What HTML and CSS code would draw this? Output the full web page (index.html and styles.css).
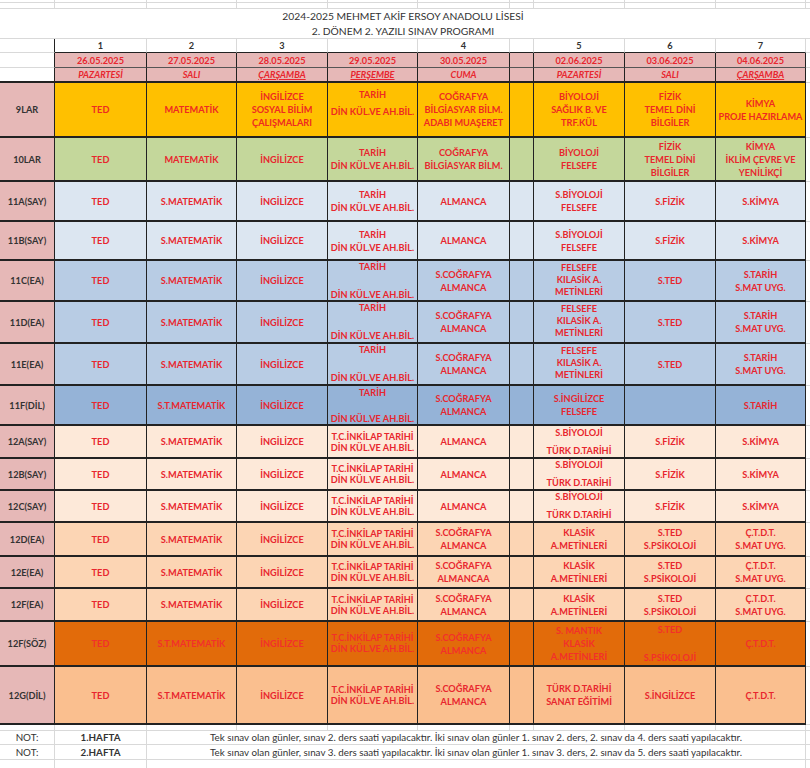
FILE: index.html
```html
<!DOCTYPE html>
<html lang="tr">
<head>
<meta charset="utf-8">
<title>2024-2025 Sınav Programı</title>
<link rel="stylesheet" href="styles.css">
</head>
<body>
<div class="sheet">
  <div class="row h3"><div class="c"></div><div class="c"></div><div class="c"></div><div class="c"></div><div class="c"></div><div class="c"></div><div class="c"></div><div class="c"></div><div class="c"></div><div class="c"></div></div>
  <div class="row h6"><div class="c"></div><div class="c"></div><div class="c"></div><div class="c"></div><div class="c"></div><div class="c"></div><div class="c"></div><div class="c"></div><div class="c"></div><div class="c"></div></div>
  <div class="row h30"><div class="c title">2024-2025 MEHMET AKİF ERSOY ANADOLU LİSESİ<br>2. DÖNEM 2. YAZILI SINAV PROGRAMI</div></div>

  <div class="row h14 nums">
    <div class="c blank"></div><div class="c">1</div><div class="c">2</div><div class="c">3</div><div class="c"></div><div class="c">4</div><div class="c"></div><div class="c">5</div><div class="c">6</div><div class="c">7</div>
  </div>
  <div class="row h15 hdr dates">
    <div class="c blank"></div><div class="c">26.05.2025</div><div class="c">27.05.2025</div><div class="c">28.05.2025</div><div class="c">29.05.2025</div><div class="c">30.05.2025</div><div class="c"></div><div class="c">02.06.2025</div><div class="c">03.06.2025</div><div class="c">04.06.2025</div>
  </div>
  <div class="row h15 hdr days">
    <div class="c blank"></div><div class="c">PAZARTESİ</div><div class="c">SALI</div><div class="c"><u>ÇARŞAMBA</u></div><div class="c"><u>PERŞEMBE</u></div><div class="c">CUMA</div><div class="c"></div><div class="c">PAZARTESİ</div><div class="c">SALI</div><div class="c"><u>ÇARŞAMBA</u></div>
  </div>

  <div class="row d h55 bg-9">
    <div class="c lbl">9LAR</div><div class="c">TED</div><div class="c">MATEMATİK</div><div class="c">İNGİLİZCE<br>SOSYAL BİLİM<br>ÇALIŞMALARI</div><div class="c l17">TARİH<br>DİN KÜL.VE AH.BİL.</div><div class="c">COĞRAFYA<br>BİLGİASYAR BİLM.<br>ADABI MUAŞERET</div><div class="c"></div><div class="c">BİYOLOJİ<br>SAĞLIK B. VE<br>TRF.KÜL</div><div class="c">FİZİK<br>TEMEL DİNİ<br>BİLGİLER</div><div class="c">KİMYA<br>PROJE HAZIRLAMA</div>
  </div>
  <div class="row d h44 bg-10">
    <div class="c lbl">10LAR</div><div class="c">TED</div><div class="c">MATEMATİK</div><div class="c">İNGİLİZCE</div><div class="c">TARİH<br>DİN KÜL.VE AH.BİL.</div><div class="c">COĞRAFYA<br>BİLGİASYAR BİLM.</div><div class="c"></div><div class="c">BİYOLOJİ<br>FELSEFE</div><div class="c">FİZİK<br>TEMEL DİNİ<br>BİLGİLER</div><div class="c">KİMYA<br>İKLİM ÇEVRE VE<br>YENİLİKÇİ</div>
  </div>
  <div class="row d h40 bg-11a">
    <div class="c lbl">11A(SAY)</div><div class="c">TED</div><div class="c">S.MATEMATİK</div><div class="c">İNGİLİZCE</div><div class="c">TARİH<br>DİN KÜL.VE AH.BİL.</div><div class="c">ALMANCA</div><div class="c"></div><div class="c">S.BİYOLOJİ<br>FELSEFE</div><div class="c">S.FİZİK</div><div class="c">S.KİMYA</div>
  </div>
  <div class="row d h39 bg-11a">
    <div class="c lbl">11B(SAY)</div><div class="c">TED</div><div class="c">S.MATEMATİK</div><div class="c">İNGİLİZCE</div><div class="c">TARİH<br>DİN KÜL.VE AH.BİL.</div><div class="c">ALMANCA</div><div class="c"></div><div class="c">S.BİYOLOJİ<br>FELSEFE</div><div class="c">S.FİZİK</div><div class="c">S.KİMYA</div>
  </div>
  <div class="row d h41 bg-11c">
    <div class="c lbl">11C(EA)</div><div class="c">TED</div><div class="c">S.MATEMATİK</div><div class="c">İNGİLİZCE</div><div class="c sp">TARİH<br><br>DİN KÜL.VE AH.BİL.</div><div class="c">S.COĞRAFYA<br>ALMANCA</div><div class="c"></div><div class="c up">FELSEFE<br>KILASİK A.<br>METİNLERİ</div><div class="c">S.TED</div><div class="c">S.TARİH<br>S.MAT UYG.</div>
  </div>
  <div class="row d h42 bg-11c">
    <div class="c lbl">11D(EA)</div><div class="c">TED</div><div class="c">S.MATEMATİK</div><div class="c">İNGİLİZCE</div><div class="c sp">TARİH<br><br>DİN KÜL.VE AH.BİL.</div><div class="c">S.COĞRAFYA<br>ALMANCA</div><div class="c"></div><div class="c up">FELSEFE<br>KILASİK A.<br>METİNLERİ</div><div class="c">S.TED</div><div class="c">S.TARİH<br>S.MAT UYG.</div>
  </div>
  <div class="row d h42 bg-11c">
    <div class="c lbl">11E(EA)</div><div class="c">TED</div><div class="c">S.MATEMATİK</div><div class="c">İNGİLİZCE</div><div class="c sp">TARİH<br><br>DİN KÜL.VE AH.BİL.</div><div class="c">S.COĞRAFYA<br>ALMANCA</div><div class="c"></div><div class="c up">FELSEFE<br>KILASİK A.<br>METİNLERİ</div><div class="c">S.TED</div><div class="c">S.TARİH<br>S.MAT UYG.</div>
  </div>
  <div class="row d h40 bg-11f">
    <div class="c lbl">11F(DİL)</div><div class="c">TED</div><div class="c">S.T.MATEMATİK</div><div class="c">İNGİLİZCE</div><div class="c">TARİH<br><br>DİN KÜL.VE AH.BİL.</div><div class="c">S.COĞRAFYA<br>ALMANCA</div><div class="c"></div><div class="c">S.İNGİLİZCE<br>FELSEFE</div><div class="c"></div><div class="c">S.TARİH</div>
  </div>
  <div class="row d h33 bg-12a">
    <div class="c lbl">12A(SAY)</div><div class="c">TED</div><div class="c">S.MATEMATİK</div><div class="c">İNGİLİZCE</div><div class="c tight">T.C.İNKİLAP TARİHİ<br>DİN KÜL.VE AH.BİL.</div><div class="c">ALMANCA</div><div class="c"></div><div class="c lh18">S.BİYOLOJİ<br>TÜRK D.TARİHİ</div><div class="c">S.FİZİK</div><div class="c">S.KİMYA</div>
  </div>
  <div class="row d h32 bg-12a">
    <div class="c lbl">12B(SAY)</div><div class="c">TED</div><div class="c">S.MATEMATİK</div><div class="c">İNGİLİZCE</div><div class="c tight">T.C.İNKİLAP TARİHİ<br>DİN KÜL.VE AH.BİL.</div><div class="c">ALMANCA</div><div class="c"></div><div class="c lh18">S.BİYOLOJİ<br>TÜRK D.TARİHİ</div><div class="c">S.FİZİK</div><div class="c">S.KİMYA</div>
  </div>
  <div class="row d h32 bg-12a">
    <div class="c lbl">12C(SAY)</div><div class="c">TED</div><div class="c">S.MATEMATİK</div><div class="c">İNGİLİZCE</div><div class="c tight">T.C.İNKİLAP TARİHİ<br>DİN KÜL.VE AH.BİL.</div><div class="c">ALMANCA</div><div class="c"></div><div class="c lh18">S.BİYOLOJİ<br>TÜRK D.TARİHİ</div><div class="c">S.FİZİK</div><div class="c">S.KİMYA</div>
  </div>
  <div class="row d h34 bg-12d">
    <div class="c lbl">12D(EA)</div><div class="c">TED</div><div class="c">S.MATEMATİK</div><div class="c">İNGİLİZCE</div><div class="c tight">T.C.İNKİLAP TARİHİ<br>DİN KÜL.VE AH.BİL.</div><div class="c">S.COĞRAFYA<br>ALMANCA</div><div class="c"></div><div class="c">KLASİK<br>A.METİNLERİ</div><div class="c">S.TED<br>S.PSİKOLOJİ</div><div class="c">Ç.T.D.T.<br>S.MAT UYG.</div>
  </div>
  <div class="row d h32 bg-12d">
    <div class="c lbl">12E(EA)</div><div class="c">TED</div><div class="c">S.MATEMATİK</div><div class="c">İNGİLİZCE</div><div class="c tight">T.C.İNKİLAP TARİHİ<br>DİN KÜL.VE AH.BİL.</div><div class="c">S.COĞRAFYA<br>ALMANCAA</div><div class="c"></div><div class="c">KLASİK<br>A.METİNLERİ</div><div class="c">S.TED<br>S.PSİKOLOJİ</div><div class="c">Ç.T.D.T.<br>S.MAT UYG.</div>
  </div>
  <div class="row d h33 bg-12d">
    <div class="c lbl">12F(EA)</div><div class="c">TED</div><div class="c">S.MATEMATİK</div><div class="c">İNGİLİZCE</div><div class="c tight">T.C.İNKİLAP TARİHİ<br>DİN KÜL.VE AH.BİL.</div><div class="c">S.COĞRAFYA<br>ALMANCA</div><div class="c"></div><div class="c">KLASİK<br>A.METİNLERİ</div><div class="c">S.TED<br>S.PSİKOLOJİ</div><div class="c">Ç.T.D.T.<br>S.MAT UYG.</div>
  </div>
  <div class="row d h45 bg-12fs">
    <div class="c lbl">12F(SÖZ)</div><div class="c">TED</div><div class="c">S.T.MATEMATİK</div><div class="c">İNGİLİZCE</div><div class="c tight up">T.C.İNKİLAP TARİHİ<br>DİN KÜL.VE AH.BİL.</div><div class="c">S.COĞRAFYA<br>ALMANCA</div><div class="c"></div><div class="c">S. MANTIK<br>KLASİK<br>A.METİNLERİ</div><div class="c spread"><span>S.TED</span><span>S.PSİKOLOJİ</span></div><div class="c">Ç.T.D.T.</div>
  </div>
  <div class="row d h58 bg-12g">
    <div class="c lbl">12G(DİL)</div><div class="c">TED</div><div class="c">S.T.MATEMATİK</div><div class="c">İNGİLİZCE</div><div class="c tight">T.C.İNKİLAP TARİHİ<br>DİN KÜL.VE AH.BİL.</div><div class="c">S.COĞRAFYA<br>ALMANCA</div><div class="c"></div><div class="c">TÜRK D.TARİHİ<br>SANAT EĞİTİMİ</div><div class="c">S.İNGİLİZCE</div><div class="c">Ç.T.D.T.</div>
  </div>

  <div class="row h6"><div class="c"></div><div class="c"></div><div class="c"></div><div class="c"></div><div class="c"></div><div class="c"></div><div class="c"></div><div class="c"></div><div class="c"></div><div class="c"></div></div>
  <div class="row h14 note">
    <div class="c">NOT:</div><div class="c wk">1.HAFTA</div><div class="c txt">Tek sınav olan günler, sınav 2. ders saati yapılacaktır. İki sınav olan günler 1. sınav 2. ders, 2. sınav da 4. ders saati yapılacaktır.</div>
  </div>
  <div class="row h15 note">
    <div class="c">NOT:</div><div class="c wk">2.HAFTA</div><div class="c txt">Tek sınav olan günler, sınav 3. ders saati yapılacaktır. İki sınav olan günler 1. sınav 3. ders, 2. sınav da 5. ders saati yapılacaktır.</div>
  </div>
  <div class="row h20 tail"><div class="c"></div><div class="c"></div><div class="c txt"></div></div>
</div>
</body>
</html>
```

FILE: styles.css
```css
html, body {
  margin: 0;
  padding: 0;
  background: #ffffff;
}

.sheet {
  width: 810px;
  overflow: hidden;
  font-family: "Lato", "Liberation Sans", sans-serif;
  font-size: 9.2px;
  line-height: 13px;
  color: #333333;
}

.row {
  display: grid;
  grid-template-columns: 55px 92px 90px 91px 90px 92px 24px 91px 91px 90px 1fr;
}

.row::after {
  content: "";
  border-bottom: 1px solid #d9d9d9;
}

.c {
  box-sizing: border-box;
  border-right: 1px solid #d9d9d9;
  border-bottom: 1px solid #d9d9d9;
  display: flex;
  align-items: center;
  justify-content: center;
  text-align: center;
  overflow: hidden;
  white-space: nowrap;
}

/* heights */
.h3 { height: 3px; }
.h6 { height: 6px; }
.h14 { height: 14px; }
.h15 { height: 15px; }
.h20 { height: 20px; }
.h30 { height: 30px; }
.h32 { height: 32px; }
.h33 { height: 33px; }
.h34 { height: 34px; }
.h39 { height: 39px; }
.h40 { height: 40px; }
.h41 { height: 41px; }
.h42 { height: 42px; }
.h44 { height: 44px; }
.h45 { height: 45px; }
.h55 { height: 55px; }
.h58 { height: 58px; }

/* title */
.title {
  grid-column: 1 / 11;
  border-right: none;
  font-size: 10.3px;
  line-height: 15px;
  color: #333333;
}

/* column numbers */
.nums .c {
  font-weight: 700;
  color: #333333;
  border-bottom: 1px solid #222222;
}
.nums .c.blank {
  border-bottom-color: #d9d9d9;
  border-right-color: #222222;
}

/* pink header rows */
.hdr .c {
  background: #e6b8b7;
  color: #e8262e;
  font-weight: 700;
  border-right: 1px solid #222222;
  border-bottom: 1px solid #555555;
}
.hdr .c.blank {
  background: #ffffff;
  border-bottom: 1px solid #d9d9d9;
}
.days .c {
  font-style: italic;
  border-bottom: 2px solid #222222;
}
.days .c.blank {
  border-bottom: 2px solid #222222;
}
.days u {
  text-decoration-thickness: 1px;
  text-underline-offset: 1px;
}

/* data rows */
.d .c {
  color: #e8262e;
  font-weight: 700;
  border-right: 1px solid #222222;
  border-bottom: 2px solid #222222;
}
.d .c.lbl {
  background: #e6b8b7;
  color: #333333;
}

.bg-9 .c { background: #ffc000; color: #ee2a22; }
.bg-10 .c { background: #c4d79b; }
.bg-11a .c { background: #dce6f1; }
.bg-11c .c { background: #b8cce4; }
.bg-11f .c { background: #95b3d7; }
.bg-12a .c { background: #fde9d9; }
.bg-12d .c { background: #fcd5b4; }
.bg-12fs .c { background: #e26b0a; color: #f2302a; }
.bg-12g .c { background: #fabf8f; }

/* line spacing variants */
.l17 { line-height: 17px; padding-bottom: 14px; }
.sp { line-height: 14px; }
.up { padding-bottom: 2px; line-height: 12px; }
.tight { line-height: 11px; }
.lh18 { line-height: 18px; }
.spread {
  flex-direction: column;
  justify-content: space-between;
  padding-top: 1px;
  line-height: 14px;
}

/* notes */
.note .c {
  font-size: 9.8px;
  color: #333333;
}
.note .c.wk {
  font-weight: 700;
}
.note .c.txt,
.tail .c.txt {
  grid-column: 3 / 11;
}
```
